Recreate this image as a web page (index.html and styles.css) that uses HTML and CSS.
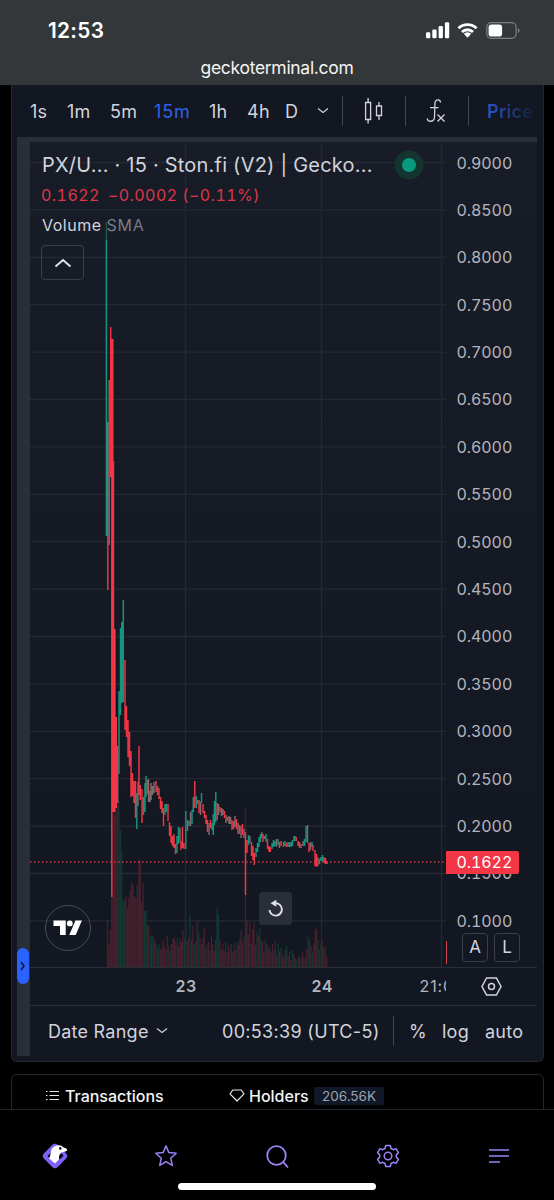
FILE: index.html
```html
<!DOCTYPE html>
<html lang="en">
<head>
<meta charset="utf-8">
<title>GeckoTerminal</title>
<link rel="stylesheet" href="styles.css">
</head>
<body>
<header class="browser">
  <div class="status">
    <span class="clock">12:53</span>
    <svg class="status-icons" width="102" height="22" viewBox="0 0 102 22">
      <g fill="#fff"><rect x="0" y="12.300" width="4.300" height="6" rx="1.200"/><rect x="6.300" y="9.500" width="4.300" height="8.800" rx="1.200"/><rect x="12.600" y="6" width="4.300" height="12.300" rx="1.200"/><rect x="18.900" y="2.300" width="4.300" height="16" rx="1.200"/></g>
      <g fill="none" stroke="#fff" stroke-width="2.900"><path d="M32.500 8.200a13 13 0 0 1 18 0M36 12a8 8 0 0 1 11 0"/></g>
      <path d="M37.800 13.800a5.200 5.200 0 0 1 7.400 0L41.500 17.800Z" fill="#fff"/>
      <rect x="60.800" y="2.700" width="29.300" height="15.600" rx="4.500" fill="none" stroke="#7d8081" stroke-width="1.200"/>
      <rect x="62.600" y="4.500" width="13.500" height="12" rx="2.800" fill="#fff"/>
      <path d="M91.900 8a2.700 2.700 0 0 1 0 5Z" fill="#7d8081"/>
    </svg>
  </div>
  <div class="url">geckoterminal.com</div>
</header>

<main class="page">
  <section class="card chart-card">
    <div class="toolbar">
      <span>1s</span><span>1m</span><span>5m</span><span class="active">15m</span><span>1h</span><span>4h</span><span>D</span>
      <svg class="chev" width="12" height="8" viewBox="0 0 12 8"><path d="M1 1.500 6 5.500 11 1.500" fill="none" stroke="#d1d4dc" stroke-width="1.200"/></svg>
      <i class="rule"></i>
      <svg width="20" height="28" viewBox="0 0 20 28" fill="none" stroke="#d1d4dc" stroke-width="1.300"><path d="M1.600 5.500h5v17h-5zM4.100 1v4.500M4.100 22.500v4M12.500 9h5v9.500h-5zM15 5v4M15 18.500V23"/></svg>
      <i class="rule"></i>
      <svg width="20" height="26" viewBox="0 0 20 26" fill="none" stroke="#d1d4dc" stroke-width="1.300"><path d="M14.500 4.500C14.500 1 9.300.5 8.900 5.500L8.500 19c-.2 5.500-6.800 5.300-7.300 1.500M4 9.700h8.500M11.500 16.500l7 7M18.500 16.500l-7 7"/></svg>
      <i class="rule"></i>
      <span class="price-toggle">Price</span>
    </div>
    <div class="workspace">
      <aside class="drawer"><button class="handle"><svg width="6" height="10" viewBox="0 0 6 10"><path d="M1 1 4 5 1 9" fill="none" stroke="#101828" stroke-width="1.500"/></svg></button></aside>
      <div class="terminal">
        <div class="pane">
          <svg class="plot" viewBox="30 142 416 825" width="416" height="825">
            <path id="grid" stroke="#242833" stroke-width="1.300"/>
            <path id="vol-up" class="vol" stroke="#133832"/>
            <path id="vol-down" class="vol" stroke="#45212d"/>
            <path id="up" class="bar" stroke="#129881"/>
            <path d="M106.400 222V240" class="bar" stroke="#17594f"/>
            <path id="flat" class="bar" stroke="#826b6b"/>
            <path id="down" class="bar" stroke="#f23645"/>
            <path d="M30 862H446" stroke="#c23c4e" stroke-width="1.600" stroke-dasharray="1.500 2.500"/>
          </svg>
          <div class="legend">
            <div class="symbol"><span>PX/U... · 15 · Ston.fi (V2) | Gecko...</span><i class="live"></i></div>
            <div class="change"><span>0.1622</span><span>−0.0002 (−0.11%)</span></div>
            <div class="study">Volume <span>SMA</span></div>
            <button class="collapse"><svg width="18" height="10" viewBox="0 0 18 10"><path d="M1.500 8.500 9 2 16.500 8.500" fill="none" stroke="#e0e3eb" stroke-width="2"/></svg></button>
          </div>
          <div class="tv"><svg width="30" height="16" viewBox="0 0 30 16" fill="#fff"><path d="M.5.500h12.200V15H7V6H.5z"/><circle cx="16.800" cy="3.400" r="2.900"/><path d="M22.400.500h6.500L22.700 15h-6.400z"/></svg></div>
          <button class="reset"><svg width="18" height="20" viewBox="0 0 18 20"><path d="M8.500 4.200a6.200 6.200 0 1 1-6 6.800" fill="none" stroke="#e0e3eb" stroke-width="1.900"/><path d="M9.300.700v7L3.500 4.200z" fill="#e0e3eb"/></svg></button>
        </div>
        <div class="scale">
          <div class="ticks"><span>0.9000</span><span>0.8500</span><span>0.8000</span><span>0.7500</span><span>0.7000</span><span>0.6500</span><span>0.6000</span><span>0.5500</span><span>0.5000</span><span>0.4500</span><span>0.4000</span><span>0.3500</span><span>0.3000</span><span>0.2500</span><span>0.2000</span><span>0.1500</span><span>0.1000</span></div>
          <div class="last">0.1622</div>
          <i class="vol-mark"></i>
          <div class="modes"><b>A</b><b>L</b></div>
        </div>
        <div class="time"><b>23</b><b>24</b><span>21:00</span></div>
        <div class="gear"><svg width="21" height="19" viewBox="0 0 21 19" fill="none" stroke="#d1d4dc" stroke-width="1.500"><path d="M5.600 1h9.800L20 9.500 15.400 18H5.600L1 9.500z"/><circle cx="10.500" cy="9.500" r="3"/></svg></div>
        <div class="footer">
          <span class="range">Date Range</span>
          <svg class="chev" width="12" height="8" viewBox="0 0 12 8"><path d="M1 1.500 6 5.500 11 1.500" fill="none" stroke="#d1d4dc" stroke-width="1.200"/></svg>
          <span class="utc">00:53:39 (UTC-5)</span><i class="rule"></i><span class="pct">%</span><span class="log">log</span><span class="auto">auto</span>
        </div>
      </div>
    </div>
  </section>

  <section class="card tabs">
    <svg class="list-icon" width="13" height="11" viewBox="0 0 13 11" stroke="#e5e7eb" stroke-width="1.100"><path d="M3.500 1.500H13M3.500 5.500H13M3.500 9.500H13M0 1.500h1.500M0 5.500h1.500M0 9.500h1.500"/></svg>
    <span class="tab-tx">Transactions</span>
    <svg class="gem" width="16" height="13" viewBox="0 0 16 13" fill="none" stroke="#e5e7eb" stroke-width="1.200" stroke-linejoin="round"><path d="M3.800 1h8.400L15 4.800 8 12 1 4.800z"/></svg>
    <span class="tab-h">Holders</span>
    <span class="count">206.56K</span>
  </section>
</main>

<nav class="bottom">
  <div class="nav-icons">
    <svg width="30" height="30" viewBox="0 0 30 30"><rect x="5.300" y="5.300" width="19.400" height="19.400" rx="4" transform="rotate(45 15 15)" fill="#7f62f5"/><path d="M11 11.500 7.500 15l3.500 3.500zM21.500 12l2 3-4 3.500-1-2.500z" fill="#08060f"/><path d="M15 22.500 9 17.500C11.500 14.500 9.500 9 13.500 6c4-2.500 8.500-2 9.500.3 1.800.7 4.300 1.300 4.200 2.800-.8 2-4.200 1.500-6.500 3-2.700 2-1 4-1.800 6.500z" fill="#fff"/><circle cx="20.300" cy="7.400" r="1.300" fill="#181220"/></svg>
    <svg width="24" height="24" viewBox="0 0 24 24" fill="none" stroke="#9b82f3" stroke-width="1.500" stroke-linejoin="round"><path d="m12 1.900 2.900 6.700 7.300.7-5.500 4.900 1.600 7.200-6.300-3.800-6.300 3.800 1.600-7.200-5.500-4.900 7.300-.7z"/></svg>
    <svg width="24" height="24" viewBox="0 0 24 24" fill="none" stroke="#9b82f3" stroke-width="1.800" stroke-linecap="round"><circle cx="11.500" cy="11.500" r="9.300"/><path d="m18.200 18.200 4.300 4.600"/></svg>
    <svg width="24" height="24" viewBox="0 0 24 24" fill="none" stroke="#9b82f3" stroke-width="1.500" stroke-linejoin="round"><path d="M9.700 1.500h4.600l.7 3 2.200 1.200 3-.9 2.300 4-2.200 2.100v2.200l2.200 2.100-2.300 4-3-.9-2.200 1.200-.7 3H9.700l-.7-3-2.200-1.200-3 .9-2.300-4 2.200-2.100v-2.200L1.500 8.800l2.300-4 3 .9L9 4.500z"/><circle cx="12" cy="12" r="3.800"/></svg>
    <svg width="24" height="24" viewBox="0 0 24 24" stroke="#9b82f3" stroke-width="1.600"><path d="M2 6h20M2 12h20M2 18h11"/></svg>
  </div>
  <div class="home-bar"></div>
</nav>
<script src="chart.js"></script>
</body>
</html>
```
FILE: styles.css
```css
* { box-sizing: border-box; }
body { margin: 0; width: 554px; height: 1200px; overflow: hidden; display: flex; flex-direction: column; background: #000; color: #d1d4dc; font-family: Inter, "Liberation Sans", sans-serif; }
svg { display: block; flex: none; }
button { padding: 0; display: grid; place-items: center; font: inherit; color: inherit; }
span { white-space: nowrap; }

.browser { height: 85px; flex: none; background: #343739; color: #fff; }
.status { height: 56px; display: flex; align-items: center; justify-content: space-between; padding: 5px 26px 0 48px; }
.clock { font-size: 20.800px; font-weight: 600; letter-spacing: .3px; }
.url { text-align: center; font-size: 17.500px; letter-spacing: -.3px; line-height: 24px; color: #f4f4f4; }

.page { height: 1024px; flex: none; overflow: hidden; }
.card { width: 533px; margin-left: 11px; border: 1px solid #222731; }
.chart-card { height: 977px; border-top: 0; border-radius: 0 0 6px 6px; background: #131722; padding-left: 5px; }
.toolbar { height: 52px; width: 515px; display: grid; grid-template-columns: 37px 43px 44px 55px 38px 38px 32px 25px 22px 41px 21px 42px 19px 1fr; align-items: center; padding-left: 13px; font-size: 18px; letter-spacing: .3px; }
.toolbar .active { color: #2f62e8; letter-spacing: .9px; }
.rule { width: 1px; height: 30px; background: #434651; display: block; }
.price-toggle { font-weight: 600; color: transparent; background: linear-gradient(90deg, #2757cf, #15203d 46px); -webkit-background-clip: text; background-clip: text; }
.workspace { display: flex; width: 520px; height: 919px; }
.drawer { width: 13px; background: #2a2e39; }
.handle { width: 12px; height: 36px; margin-top: 811px; border: 0; border-radius: 6px; background: #2962ff; }
.terminal { width: 507px; height: 919px; border-top: 5px solid #2a2e39; display: grid; grid-template-columns: 416px 91px; grid-template-rows: 825px 38px 51px; background: #131722; }
.pane { position: relative; overflow: hidden; background: #171b26; border-top-left-radius: 4px; }
.plot { position: absolute; inset: 0; background: linear-gradient(#181c27, #131722); }
.bar { stroke-width: 1.450; }
.vol { stroke-width: 1.300; }
.legend { position: relative; padding: 9px 0 0 12px; }
.symbol { height: 27px; width: 384px; display: flex; align-items: center; justify-content: space-between; font-size: 20px; letter-spacing: .22px; }
.live { width: 14px; height: 14px; margin-right: 10px; border-radius: 50%; background: #089981; box-shadow: 0 0 0 7.500px #14352f; }
.change { display: flex; gap: 8px; height: 33px; align-items: center; margin-left: -1px; font-size: 16px; font-variant-numeric: tabular-nums; letter-spacing: .45px; color: #dc3648; }
.study { height: 29px; line-height: 29px; font-size: 16px; letter-spacing: .5px; }
.study span { color: #787b86; letter-spacing: .8px; }
.collapse { width: 43px; height: 35px; margin: 5px 0 0 -1px; border: 1px solid #3a3e49; border-radius: 4px; background: transparent; }
.tv { position: absolute; left: 15px; top: 763px; width: 46px; height: 46px; border: 1.500px solid #4a4d57; border-radius: 50%; display: grid; place-items: center; }
.reset { position: absolute; left: 229px; top: 750px; width: 33px; height: 33px; border: 0; border-radius: 4px; background: #2a2e39; }
.scale { position: relative; font-size: 16px; letter-spacing: -.08px; font-variant-numeric: tabular-nums; color: #b2b5be; background: linear-gradient(#181c27, #131722); }
.ticks { display: flex; flex-direction: column; margin-top: -2.500px; padding-left: 10.500px; }
.ticks span { height: 47.400px; line-height: 47.400px; }
.last { position: absolute; left: 0; top: 709px; width: 73px; height: 23px; line-height: 23px; padding-left: 10.500px; background: #f23645; color: #fff; border-radius: 0 2px 2px 0; }
.vol-mark { position: absolute; left: 0; top: 799px; width: 1px; height: 23px; background: #cf3f50; }
.modes { position: absolute; left: 16px; top: 791px; display: flex; gap: 6px; }
.modes b { width: 26px; height: 29px; border: 1.500px solid #3a3e49; border-radius: 4px; text-align: center; line-height: 27px; font-size: 17px; font-weight: 400; color: #d1d4dc; }
.time { height: 38px; overflow: hidden; border-top: 1px solid #2a2e39; display: grid; grid-template-columns: 136px 108px 26px; padding-left: 145.500px; font-size: 16px; line-height: 37px; color: #b2b5be; }
.time b { font-weight: 600; letter-spacing: .5px; }
.time span { letter-spacing: .9px; }
.gear { border-top: 1px solid #2a2e39; padding: 9px 0 0 35px; }
.footer { grid-column: 1 / 3; border-top: 1px solid #2a2e39; display: grid; grid-template-columns: 108px 66px 171px 16px 33px 43px 1fr; align-items: center; padding-left: 18px; font-size: 18px; letter-spacing: .25px; }
.utc { letter-spacing: .32px; }

.tabs { height: 40px; margin-top: 12px; border-radius: 6px 6px 0 0; display: flex; align-items: center; padding: 3px 0 0 34px; font-size: 16px; font-weight: 500; color: #f3f4f6; }
.tab-tx { margin-left: 6px; width: 164px; }
.tab-h { margin-left: 4px; width: 65px; }
.count { width: 70px; height: 18px; background: #111827; border-radius: 2px; line-height: 18px; text-align: center; font-size: 13.500px; font-weight: 400; color: #9ca3af; }

.bottom { height: 91px; flex: none; border-top: 1px solid #20242e; background: #000; }
.nav-icons { width: 554px; height: 74px; padding-top: 18px; display: grid; grid-template-columns: repeat(5, 110.800px); justify-items: center; align-items: center; }
.home-bar { width: 198px; height: 7px; border-radius: 4px; background: #fff; margin: -1px 0 0 178px; }
```
FILE: chart.js
```js
// Each bar is x, high, low in chart units.
const down = `110.700,327,477 111.800,339,897 112.800,339,812 113.500,461,812 114.900,629,812 116.300,717,808 125,660,730 126.500,706,737 128,720,757 129.500,732,766 131,751,797 132.500,773,796 134,781,803 135.500,781,818 139,746,795 140.300,785,800 142,789,823 147.500,780,794 156,781,792 159,788,799 160.500,797,809 162,801,813 163.500,808,826 168,804,821 169.500,822,836 171,826,843 172.500,836,846 174,834,848 175.500,844,854 181,841,850 182.500,827,848 184,843,849 194.800,781,808 199,800,813 203,804,813 204.500,811,818 206,815,824 207.500,820,832 210.500,820,828 217.200,803,820 220,807,812 224.500,811,818 227.500,817,821 232,820,830 236.500,819,829 239.500,825,834 242.500,824,835 245.500,832,895 247,840,853 251.500,842,856 253,846,860 254.300,853,865 263,834,842 267.500,839,849 269,846,852 270.300,847,852 281,841,846 286.500,843,847 296.300,837,841 298,841,846 299.500,842,848 309,843,852 313,845,851 315,850,866 316.500,854,867 324,857,863 325.500,858,864 327,861,864`;
const flat = `107.600,422,536 109.200,380,545 117.700,746,803 138,782,806 148.500,779,802 150,791,802 151,783,800 152.500,786,795 154,782,793 157.500,786,795 180,828,842 187.500,820,831 190.500,812,826 200.500,802,815 209,823,835 218.500,804,815 221.500,808,816 223,809,815 226,815,823 229,816,824 230.500,817,824 233.500,821,829 235,816,827 238,823,834 241,826,838 244,829,838 250,836,843 261.800,832,838 264.500,836,839 276.500,839,847 279.500,842,848 283.500,842,847 289.500,842,847 301,844,848 303,841,846 307.500,825,843 310.500,842,850 318,857,866`;
const up = `106.400,240,536 119,691,774 120.500,628,715 121.800,622,703 123.300,600,702 136.800,793,829 143.500,797,815 145,783,812 146,776,797 165,804,815 166.500,804,812 177,836,853 178.500,827,844 185.800,811,849 189,821,826 192,810,824 193.300,797,812 196.300,796,808 197.800,800,804 201.500,793,803 212,823,830 213.300,814,835 214.500,801,825 215.800,792,822 248.500,835,845 256,848,857 257.500,843,852 259,837,847 260.500,834,842 266,834,842 272,843,849 273.500,840,847 275,841,846 278,839,845 285,841,846 288,842,847 291,842,847 292.500,840,846 294,836,841 295,836,841 304.500,839,846 306,826,842 312,842,847 319.500,859,864 321,857,861 322.500,855,861`;
const toPath = s => s.split(' ').map(b => b.split(',')).map(([x, h, l]) => `M${x} ${h}V${l}`).join('');
document.getElementById('down').setAttribute('d', toPath(down) + 'M107.800 536V590');
document.getElementById('flat').setAttribute('d', toPath(flat));
document.getElementById('up').setAttribute('d', toPath(up));

let grid = 'M185.500 142V967M321.500 142V967M441.500 142V967';
for (let i = 0; i < 17; i++) grid += `M30 ${162.500 + i * 47.400}H446`;
document.getElementById('grid').setAttribute('d', grid);

// Volume tops, one per bar from the first traded interval.
const tops = [920,945,930,820,806,815,812,806,800,830,852,900,901,896,908,898,890,882,885,896,898,885,896,860,902,883,911,911,925,925,935,937,936,940,943,948,944,948,950,940,947,950,936,946,951,944,939,938,942,938,946,938,942,930,938,922,941,937,915,940,926,945,941,920,932,938,944,938,928,948,945,942,950,936,944,951,940,908,914,940,950,944,951,942,952,945,949,944,952,943,950,942,945,939,930,942,937,898,920,935,922,944,930,923,945,932,936,928,940,942,952,940,944,949,946,952,944,950,941,955,944,951,948,954,958,950,946,956,952,960,950,954,958,960,958,957,959,951,957,959,949,937,940,946,952,943,930,928,940,950,943,940,948,946,956];
const upBars = new Set([8,9,10,11,12,21,26,27,28,30,31,32,34,36,41,44,49,54,55,58,61,64,66,70,72,76,77,78,83,86,91,96,101,105,107,108,111,114,117,120,122,126,128,130,133,136,139,141,144,148,150,152]);
let vu = '', vd = 'M245.500 808V967M139 860V967';
tops.forEach((t, i) => {
  const m = `M${(107.500 + i * 1.423).toFixed(2)} ${t}V967`;
  if (upBars.has(i)) vu += m; else vd += m;
});
document.getElementById('vol-up').setAttribute('d', vu);
document.getElementById('vol-down').setAttribute('d', vd);
```
